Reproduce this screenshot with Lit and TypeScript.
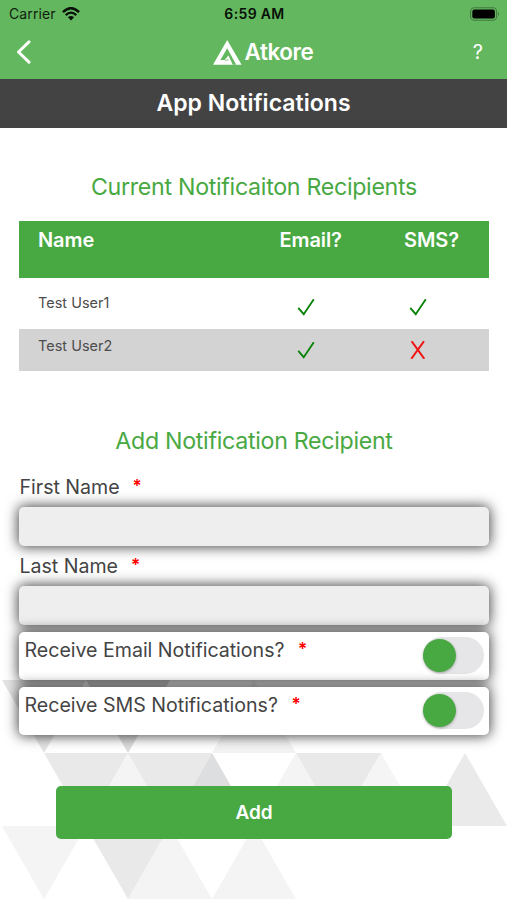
import { LitElement, html, css, svg } from "lit";
import { customElement, property } from "lit/decorators.js";

const check = html`<svg class="mark" width="18" height="18" viewBox="0 0 18 18">
  <path d="M1.3 9.8 L6.7 16.2 L16.8 1.2" fill="none" stroke="#078207" stroke-width="1.8" />
</svg>`;
const cross = html`<svg class="mark" width="18" height="18" viewBox="0 0 18 18">
  <path d="M2.6 .2 L15.3 17.8 M15 .2 L2.3 17.8" fill="none" stroke="#f01414" stroke-width="2" />
</svg>`;

const triangles: [string, string][] = [
  ["2,680 86,680 44,753", "#e4e4e4"],
  ["86,680 170,680 128,753", "#dcdcdc"],
  ["254,680 296,753 212,753", "#f3f3f3"],
  ["44,753 128,753 86,826", "#e9e9e9"],
  ["128,753 170,826 86,826", "#f4f4f4"],
  ["128,753 212,753 170,826", "#e9e9e9"],
  ["212,753 254,826 170,826", "#dcdedf"],
  ["296,753 338,826 254,826", "#f4f4f4"],
  ["296,753 381,753 338,826", "#e9e9e9"],
  ["381,753 423,826 338,826", "#f5f5f5"],
  ["465,753 507,826 423,826", "#eaeaea"],
  ["2,826 86,826 44,899", "#f4f4f4"],
  ["86,826 170,826 128,899", "#e9e9e9"],
  ["170,826 212,899 128,899", "#f4f4f4"],
  ["254,826 296,899 212,899", "#f4f4f4"],
];

@customElement("switch-card")
export class SwitchCard extends LitElement {
  @property() label = "";

  static styles = css`
    :host {
      display: flex;
      justify-content: space-between;
      box-sizing: border-box;
      height: 48px;
      padding: 5px 5px 0 5.5px;
      border-radius: 5px;
      background: #fff;
      box-shadow: 0 0 13px 1px rgba(0, 0, 0, 0.74);
    }
    .text {
      font-size: 19.6px;
      line-height: 26px;
      letter-spacing: -0.02px;
      white-space: pre;
      color: #444;
    }
    .star {
      color: #f00;
      margin-left: 13.5px;
      font-size: 17px;
      font-weight: 600;
      line-height: 1;
      vertical-align: 2px;
    }
    .track {
      width: 61px;
      height: 37px;
      border-radius: 19px;
      background: #e6e6e8;
    }
    .thumb {
      width: 33px;
      height: 33px;
      margin: 2px 0 0 0;
      border-radius: 50%;
      background: #48a842;
      box-shadow: 0 1px 3px rgba(0, 0, 0, 0.3);
    }
  `;

  render() {
    return html`<div class="text">${this.label}<span class="star">*</span></div>
      <div class="track"><div class="thumb"></div></div>`;
  }
}

@customElement("app-root")
export class AppRoot extends LitElement {
  static styles = css`
    :host {
      display: block;
      position: relative;
      width: 507px;
      height: 900px;
      overflow: hidden;
      background: #fff;
      font-family: Inter, "Liberation Sans", sans-serif;
      color: #444;
    }
    .backdrop {
      position: absolute;
      inset: 0;
    }
    .page {
      position: relative;
      display: flex;
      flex-direction: column;
    }
    .top {
      height: 79px;
      background: #63b75e;
    }
    .status,
    .nav {
      display: grid;
      grid-template-columns: 1fr auto 1fr;
      align-items: center;
    }
    .status {
      height: 27px;
      padding: 0 7px 0 9px;
      font-size: 14px;
      color: #10200f;
    }
    .carrier {
      display: flex;
      align-items: center;
      gap: 6px;
      letter-spacing: 0.1px;
    }
    .time {
      font-weight: 600;
      letter-spacing: 0.35px;
      color: #071007;
    }
    .end {
      justify-self: end;
    }
    .nav {
      height: 50px;
      padding: 0 24px 0 16px;
      color: #fff;
    }
    .brand {
      display: flex;
      align-items: center;
      gap: 3px;
      margin-left: 27px;
    }
    .word {
      font-size: 22.4px;
      font-weight: 600;
      letter-spacing: -0.4px;
      line-height: 26px;
    }
    .help {
      font-size: 20px;
    }
    svg {
      display: block;
    }
    .title {
      height: 48.5px;
      line-height: 49px;
      background: #434343;
      color: #fff;
      font-size: 23px;
      font-weight: 600;
      text-align: center;
      letter-spacing: 0.03px;
    }
    .content {
      display: flex;
      flex-direction: column;
      padding: 0 18px 0 19px;
    }
    h2 {
      margin: 0;
      font-size: 23.2px;
      font-weight: 400;
      line-height: 30px;
      text-align: center;
      letter-spacing: -0.3px;
      color: #48a842;
    }
    .current {
      margin: 44.5px 0 19px;
    }
    .adding {
      margin: 55px 0 18px;
    }
    .row {
      display: grid;
      grid-template-columns: 214px 146px 1fr;
      padding-left: 19px;
      box-sizing: border-box;
      font-size: 14.4px;
    }
    .head {
      grid-template-columns: 241.5px 124.5px 1fr;
      height: 57px;
      padding-top: 5px;
      background: #48a842;
      color: #fff;
      font-size: 20px;
      line-height: 28px;
      font-weight: 600;
      letter-spacing: -0.1px;
    }
    .one {
      height: 51px;
      padding-top: 15px;
    }
    .two {
      height: 42px;
      padding-top: 7px;
      background: #d3d3d3;
    }
    .row .name {
      line-height: 20px;
      letter-spacing: 0.05px;
      color: #4c4c4c;
    }
    .mark {
      margin: 5px 0 0 45px;
    }
    .sms .mark {
      margin-left: 11px;
    }
    .label {
      font-size: 19.6px;
      line-height: 26px;
      letter-spacing: -0.02px;
      padding-left: 0.5px;
    }
    .star {
      margin-left: 13px;
      color: #f00;
      font-size: 17px;
      font-weight: 600;
      line-height: 1;
      vertical-align: 2px;
    }
    .field {
      height: 39px;
      margin: 7px 0;
      border-radius: 5px;
      background: #eee;
      box-shadow: 0 0 13px 1px rgba(0, 0, 0, 0.74);
    }
    .cards {
      display: flex;
      flex-direction: column;
      gap: 7px;
    }
    .add {
      height: 53px;
      margin: 51px 37px 0;
      border: 0;
      border-radius: 5px;
      background: #48a842;
      color: #fff;
      font: 600 19px/54px Inter, "Liberation Sans", sans-serif;
      text-align: center;
      padding: 0;
    }
  `;

  render() {
    return html`
      <svg class="backdrop" width="507" height="900" viewBox="0 0 507 900">
        ${triangles.map(([points, fill]) => svg`<polygon points=${points} fill=${fill} />`)}
      </svg>
      <div class="page">
        <div class="top">
          <div class="status">
            <div class="carrier">
              Carrier
              <svg width="18" height="14" viewBox="0 0 18 14" fill="none" stroke="#071007">
                <path d="M.9 5.2 Q9 -2.7 17.1 5.2" stroke-width="2.4" />
                <path d="M3.7 8.2 Q9 3.1 14.3 8.2" stroke-width="2.3" />
                <path d="M5.9 10.3 Q9 7.6 12.1 10.3 L9 13.6 Z" fill="#071007" stroke="none" />
              </svg>
            </div>
            <div class="time">6:59 AM</div>
            <svg class="end" width="30" height="14" viewBox="0 0 30 14">
              <rect x=".6" y=".8" width="26" height="12.4" rx="3.8" fill="none" stroke="#42793f" stroke-width="1.1" />
              <rect x="2.3" y="2.5" width="22.6" height="9" rx="2.2" fill="#000" />
              <path d="M28 4.8 Q30 7 28 9.2Z" fill="#42793f" />
            </svg>
          </div>
          <div class="nav">
            <svg width="16" height="24" viewBox="0 0 16 24">
              <path d="M13 1.8 L2.5 12 L13 22.2" fill="none" stroke="#fff" stroke-width="3" stroke-linecap="round" stroke-linejoin="round" />
            </svg>
            <div class="brand">
              <svg width="29" height="25" viewBox="0 0 29 25">
                <path d="M14.2 0 L28.6 24.8 H0 Z" fill="#fff" />
                <path d="M14.2 8.2 L23.2 24.8 H19.8 L15.4 15.4 L11.6 20 H7.4 Z" fill="#63b75e" />
                <path d="M11.6 20 L15.2 18.4 L15.6 21 H12.4 Z" fill="#63b75e" opacity=".45" />
              </svg>
              <div class="word">Atkore</div>
            </div>
            <div class="end help">?</div>
          </div>
        </div>
        <div class="title">App Notifications</div>
        <div class="content">
          <h2 class="current">Current Notificaiton Recipients</h2>
          <div class="row head">
            <div>Name</div>
            <div>Email?</div>
            <div>SMS?</div>
          </div>
          <div class="row one">
            <div class="name">Test User1</div>
            <div>${check}</div>
            <div class="sms">${check}</div>
          </div>
          <div class="row two">
            <div class="name">Test User2</div>
            <div>${check}</div>
            <div class="sms">${cross}</div>
          </div>
          <h2 class="adding">Add Notification Recipient</h2>
          <div class="label">First Name<span class="star">*</span></div>
          <div class="field"></div>
          <div class="label">Last Name<span class="star">*</span></div>
          <div class="field"></div>
          <div class="cards">
            <switch-card label="Receive Email Notifications?"></switch-card>
            <switch-card label="Receive SMS Notifications?"></switch-card>
          </div>
          <button class="add">Add</button>
        </div>
      </div>
    `;
  }
}
